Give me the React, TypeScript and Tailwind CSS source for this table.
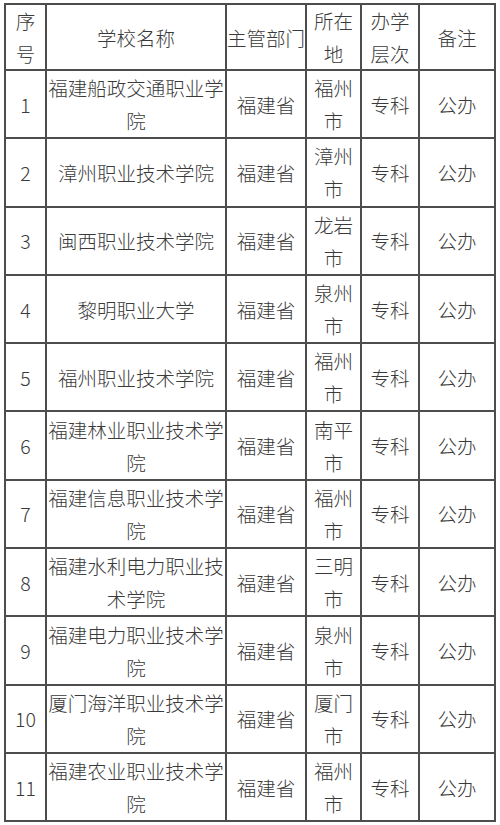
const HEADERS: string[][] = [['序', '号'], ['学校名称'], ['主管部门'], ['所在', '地'], ['办学', '层次'], ['备注']]

const ROWS: [string, string, string][] = [
  ['1', '福建船政交通职业学院', '福州市'],
  ['2', '漳州职业技术学院', '漳州市'],
  ['3', '闽西职业技术学院', '龙岩市'],
  ['4', '黎明职业大学', '泉州市'],
  ['5', '福州职业技术学院', '福州市'],
  ['6', '福建林业职业技术学院', '南平市'],
  ['7', '福建信息职业技术学院', '福州市'],
  ['8', '福建水利电力职业技术学院', '三明市'],
  ['9', '福建电力职业技术学院', '泉州市'],
  ['10', '厦门海洋职业技术学院', '厦门市'],
  ['11', '福建农业职业技术学院', '福州市'],
]

function Cell({ lines }: { lines: string[] }) {
  return (
    <div className="flex items-center justify-center bg-white text-center leading-[33px]">
      <span className="whitespace-nowrap">
        {lines.map((l, i) => (
          <span key={i} className="block">{l}</span>
        ))}
      </span>
    </div>
  )
}

export default function App() {
  return (
    <div className="w-[500px] h-[825px] overflow-hidden bg-white pt-[3px] pl-[4px]">
      <div
        className="grid w-fit gap-[2px] bg-[#4d4d4d] p-[2px] text-[19.5px] font-light text-[#3a3a3a] grid-cols-[39px_178px_78px_53px_56px_74px] grid-rows-[64px_repeat(11,66.3px)]"
        style={{ fontFamily: '"Noto Sans CJK SC", "Noto Sans", sans-serif' }}
      >
        {HEADERS.map(h => (
          <Cell key={h.join('')} lines={h} />
        ))}
        {ROWS.map(([n, name, city]) => (
          <div key={n} className="contents">
            <Cell lines={[n]} />
            <Cell lines={name.length > 9 ? [name.slice(0, 9), name.slice(9)] : [name]} />
            <Cell lines={['福建省']} />
            <Cell lines={[city.slice(0, 2), city.slice(2)]} />
            <Cell lines={['专科']} />
            <Cell lines={['公办']} />
          </div>
        ))}
      </div>
    </div>
  )
}
